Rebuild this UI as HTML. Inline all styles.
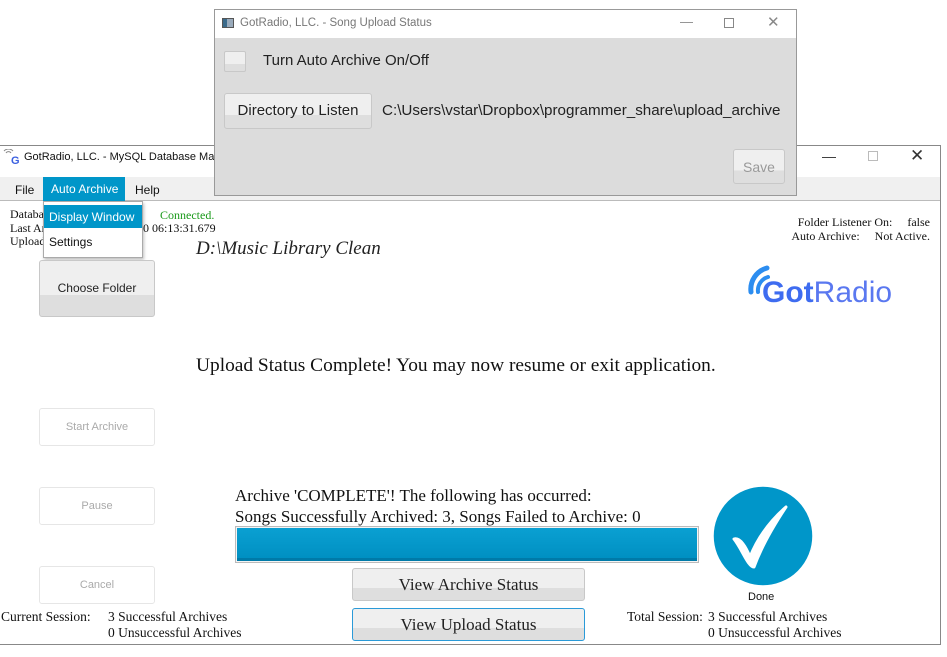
<!DOCTYPE html>
<html><head><meta charset="utf-8"><style>
*{margin:0;padding:0;box-sizing:border-box}
body{width:947px;height:657px;background:#fff;position:relative;overflow:hidden;font-family:"Liberation Sans",sans-serif}
.a{position:absolute;white-space:nowrap}
.serif{font-family:"Liberation Serif",serif}
.btn{position:absolute;border:1px solid #c8c8c8;border-radius:3px;background:linear-gradient(#efefef 0,#efefef 62%,#dedede 62%,#dedede 100%);display:flex;align-items:center;justify-content:center;color:#222}
.dis{position:absolute;border:1px solid #e6e6e6;border-radius:3px;background:#fff;color:#aaa;font-size:11px;display:flex;align-items:center;justify-content:center}
</style></head><body>

<!-- main window -->
<div class="a" style="left:0;top:145px;width:941px;height:500px;border-top:1px solid #888;border-right:1px solid #888;border-bottom:1px solid #888;background:#fff"></div>
<div class="a" style="left:0;top:177px;width:940px;height:24px;background:#f0f0f0;border-bottom:1px solid #bbb"></div>
<svg class="a" style="left:3px;top:149px" width="18" height="16" viewBox="0 0 18 16"><path d="M3 4a3 3 0 0 1 5 0M1 2a6 6 0 0 1 9 0" stroke="#888" fill="none"/><text x="8" y="15" font-size="11" font-weight="bold" fill="#3a5fe0" font-family="Liberation Sans">G</text></svg>
<div class="a" style="left:24px;top:151px;font-size:11px;color:#111">GotRadio, LLC. - MySQL Database Ma</div>
<div class="a" style="left:822px;top:148px;font-size:14px;color:#333">&#8212;</div>
<div class="a" style="left:868px;top:151px;width:10px;height:10px;border:1px solid #bbb"></div>
<div class="a" style="left:910px;top:146px;font-size:17px;color:#333">&#10005;</div>
<div class="a" style="left:15px;top:183px;font-size:12px;color:#111">File</div>
<div class="a" style="left:43px;top:177px;width:82px;height:24px;background:#0096c9;color:#fff;font-size:12px;padding:5px 0 0 8px">Auto Archive</div>
<div class="a" style="left:135px;top:183px;font-size:12px;color:#111">Help</div>

<div class="a serif" style="left:10px;top:208px;font-size:12px;color:#111;line-height:13.5px">Database Status:<br>Last Archive:<br>Upload</div>
<div class="a serif" style="left:143px;top:221px;font-size:12px;color:#111">0 06:13:31.679</div>
<div class="a serif" style="left:160px;top:208px;font-size:12px;color:#1a9a1a">Connected.</div>

<!-- dropdown -->
<div class="a" style="left:43px;top:201px;width:100px;height:57px;background:#fff;border:1px solid #aaa;box-shadow:1px 2px 3px rgba(0,0,0,.25)"></div>
<div class="a" style="left:44px;top:205px;width:98px;height:23px;background:#0096c9;color:#fff;font-size:12px;padding:5px 0 0 5px">Display Window</div>
<div class="a" style="left:49px;top:235px;font-size:12px;color:#111">Settings</div>

<div class="a serif" style="left:196px;top:238px;font-size:19px;font-style:italic;color:#222">D:\Music Library Clean</div>

<div class="a serif" style="left:600px;top:215px;width:330px;text-align:right;font-size:12px;color:#111;line-height:14px">Folder Listener On:&nbsp;&nbsp;&nbsp;&nbsp; false<br>Auto Archive:&nbsp;&nbsp;&nbsp;&nbsp; Not Active.</div>

<!-- logo -->
<svg class="a" style="left:746px;top:262px" width="152" height="46" viewBox="0 0 152 46">
<path d="M5 30a22 22 0 0 1 16-24" stroke="#2c8df0" stroke-width="5" fill="none" stroke-linecap="round"/>
<path d="M12 30a14 14 0 0 1 10-15" stroke="#2c8df0" stroke-width="4" fill="none" stroke-linecap="round"/>
<text x="16" y="40" font-family="Liberation Sans" font-size="30" fill="#5a78f0"><tspan font-weight="bold" fill="#3e6cf0">Got</tspan><tspan>Radio</tspan></text>
</svg>

<div class="btn" style="left:39px;top:260px;width:116px;height:57px;font-size:12px;padding-bottom:2px">Choose Folder</div>

<div class="a serif" style="left:196px;top:355px;font-size:19.4px;color:#111">Upload Status Complete! You may now resume or exit application.</div>

<div class="dis" style="left:39px;top:408px;width:116px;height:38px">Start Archive</div>
<div class="dis" style="left:39px;top:487px;width:116px;height:38px">Pause</div>
<div class="dis" style="left:39px;top:566px;width:116px;height:38px">Cancel</div>

<div class="a serif" style="left:235px;top:485px;font-size:17px;color:#111;line-height:21px">Archive 'COMPLETE'! The following has occurred:<br>Songs Successfully Archived: 3, Songs Failed to Archive: 0</div>
<div class="a" style="left:235px;top:526px;width:464px;height:37px;border:1px solid #bbb;background:#f4f4f4;padding:1px"><div style="width:100%;height:100%;background:linear-gradient(#0aa0d2,#0090c2);border-bottom:3px solid #007aa8"></div></div>

<svg class="a" style="left:712px;top:485px" width="102" height="102" viewBox="0 0 102 102"><circle cx="51" cy="51" r="50" fill="#0096c9" stroke="#fff" stroke-width="1.5"/><path d="M22 54 C28 52 34 62 38 72 C46 52 58 36 74 22 C62 40 50 60 42 82 C36 82 30 64 22 54 Z" fill="#fff" stroke="#fff" stroke-width="3" stroke-linejoin="round"/></svg>
<div class="a" style="left:748px;top:591px;font-size:11px;color:#111">Done</div>

<div class="btn serif" style="left:352px;top:568px;width:233px;height:33px;font-size:17px">View Archive Status</div>
<div class="btn serif" style="left:352px;top:608px;width:233px;height:33px;font-size:17px;border-color:#2a9ad8">View Upload Status</div>

<div class="a serif" style="left:1px;top:609px;font-size:13.5px;color:#111">Current Session:</div>
<div class="a serif" style="left:108px;top:609px;font-size:13.5px;color:#111;line-height:16px">3 Successful Archives<br>0 Unsuccessful Archives</div>
<div class="a serif" style="left:627px;top:609px;font-size:13.5px;color:#111">Total Session:</div>
<div class="a serif" style="left:708px;top:609px;font-size:13.5px;color:#111;line-height:16px">3 Successful Archives<br>0 Unsuccessful Archives</div>

<!-- top window -->
<div class="a" style="left:214px;top:9px;width:583px;height:187px;border:1px solid #999;background:#dcdcdc"></div>
<div class="a" style="left:215px;top:10px;width:581px;height:28px;background:#fff"></div>
<div class="a" style="left:222px;top:18px;width:12px;height:10px;background:linear-gradient(90deg,#3a6a8a 40%,#9ab 40%);border:1px solid #555"></div>
<div class="a" style="left:240px;top:17px;font-size:11.5px;color:#777">GotRadio, LLC. - Song Upload Status</div>
<div class="a" style="left:680px;top:14px;font-size:13px;color:#888">&#8212;</div>
<div class="a" style="left:724px;top:18px;width:10px;height:10px;border:1px solid #888"></div>
<div class="a" style="left:767px;top:13px;font-size:15px;color:#888">&#10005;</div>
<div class="btn" style="left:224px;top:51px;width:22px;height:21px;border-radius:2px"></div>
<div class="a" style="left:263px;top:52px;font-size:15px;color:#222">Turn Auto Archive On/Off</div>
<div class="btn" style="left:224px;top:93px;width:148px;height:36px;font-size:15px;padding-bottom:2px">Directory to Listen</div>
<div class="a" style="left:382px;top:102px;font-size:15.2px;color:#222">C:\Users\vstar\Dropbox\programmer_share\upload_archive</div>
<div class="btn" style="left:733px;top:149px;width:52px;height:35px;font-size:14px;color:#999">Save</div>

</body></html>
